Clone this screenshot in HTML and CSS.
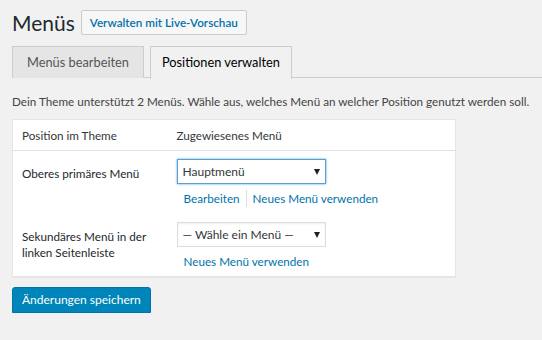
FILE: index.html
```html
<!DOCTYPE html>
<html lang="de">
<head>
    <meta charset="UTF-8">
    <title>Menüs</title>
    <link rel="stylesheet" href="styles.css">
</head>
<body>
    <div class="wrap">
        <div class="title-row">
            <h1>Menüs</h1>
            <a class="title-action" href="#">Verwalten mit Live-Vorschau</a>
        </div>

        <div class="tabs">
            <a class="tab" href="#">Menüs bearbeiten</a>
            <a class="tab active" href="#">Positionen verwalten</a>
        </div>

        <p class="intro">Dein Theme unterstützt 2 Menüs. Wähle aus, welches Menü an welcher Position genutzt werden soll.</p>

        <table class="locations">
            <thead>
                <tr>
                    <th class="col-name">Position im Theme</th>
                    <th>Zugewiesenes Menü</th>
                </tr>
            </thead>
            <tbody>
                <tr>
                    <td class="col-name">Oberes primäres Menü</td>
                    <td>
                        <span class="select focus">
                            <select>
                                <option>Hauptmenü</option>
                            </select>
                        </span>
                        <div class="links">
                            <a href="#">Bearbeiten</a><span class="sep"></span><a href="#">Neues Menü verwenden</a>
                        </div>
                    </td>
                </tr>
                <tr>
                    <td class="col-name">Sekundäres Menü in der linken Seitenleiste</td>
                    <td>
                        <span class="select">
                            <select>
                                <option>— Wähle ein Menü —</option>
                            </select>
                        </span>
                        <div class="links">
                            <a href="#">Neues Menü verwenden</a>
                        </div>
                    </td>
                </tr>
            </tbody>
        </table>

        <button class="save-btn">Änderungen speichern</button>
    </div>
</body>
</html>
```

FILE: styles.css
```css
* {
    margin: 0;
    padding: 0;
    box-sizing: border-box;
}

body {
    font-family: Lato, 'Open Sans', sans-serif;
    font-size: 11.7px;
    background: #f1f1f1;
    color: #444;
}

a {
    color: #0073aa;
    text-decoration: none;
}

.wrap {
    padding: 10px 0 0 12px;
}

.title-row {
    display: flex;
    align-items: center;
    gap: 6px;
}

h1 {
    font-size: 21px;
    font-weight: 400;
    line-height: 24px;
    color: #23282d;
}

.title-action {
    display: inline-block;
    height: 25px;
    line-height: 23px;
    padding: 0 8px;
    border: 1px solid #ccc;
    border-radius: 2px;
    background: #f7f7f7;
    font-size: 11.7px;
    font-weight: 600;
}

.tabs {
    display: flex;
    gap: 6px;
    margin-top: 11px;
    border-bottom: 1px solid #ccc;
    height: 32px;
}

.tab {
    height: 32px;
    padding: 0 11px;
    line-height: 30px;
    font-size: 12.8px;
    color: #555;
    background: #e5e5e5;
    border: 1px solid #ccc;
    border-bottom: none;
}

.tab:first-child {
    padding: 0 14px;
}

.tab.active {
    color: #000;
    background: #f1f1f1;
    height: 33px;
}

.intro {
    margin: 14px 0 8px;
    line-height: 19px;
}

.locations {
    width: 444px;
    background: #fff;
    border: 1px solid #e5e5e5;
    border-collapse: collapse;
    box-shadow: 0 1px 1px rgba(0, 0, 0, 0.04);
    color: #32373c;
}

.locations th {
    font-weight: 400;
    text-align: left;
    height: 31px;
    padding: 0 9px;
    border-bottom: 1px solid #e1e1e1;
}

.locations td {
    vertical-align: top;
    padding: 8px 9px 0;
}

.locations th.col-name,
.locations td.col-name {
    width: 164px;
    padding-right: 8px;
}

.locations td.col-name {
    padding-top: 14px;
    line-height: 16px;
    color: #23282d;
}

.locations th + th {
    padding-left: 0;
}

.locations td + td {
    padding-left: 0;
}

.select {
    position: relative;
    display: inline-block;
}

.select select {
    appearance: none;
    -webkit-appearance: none;
    width: 149px;
    height: 25px;
    padding: 0 20px 0 5px;
    font-family: inherit;
    font-size: 12px;
    color: #32373c;
    background: #fff;
    border: 1px solid #ddd;
    box-shadow: inset 0 1px 2px rgba(0, 0, 0, 0.07);
    outline: none;
}

.select.focus select {
    border-color: #5b9dd9;
    box-shadow: 0 0 2px rgba(30, 140, 190, 0.8);
}

.select::after {
    content: "";
    position: absolute;
    right: 6px;
    top: 10px;
    border-left: 3px solid transparent;
    border-right: 3px solid transparent;
    border-top: 6px solid #222;
    pointer-events: none;
}

.links {
    display: flex;
    align-items: center;
    padding: 4px 0 6px 7px;
    line-height: 20px;
}

.sep {
    width: 1px;
    height: 17px;
    background: #ddd;
    margin: 0 6px;
}

.locations tr:last-child .links {
    padding-bottom: 5px;
}

.save-btn {
    margin-top: 10px;
    height: 26px;
    padding: 0 9px 1px;
    font-family: inherit;
    font-size: 12px;
    color: #fff;
    background: #0085ba;
    border: 1px solid #0073aa;
    border-radius: 3px;
    box-shadow: 0 1px 0 #006799;
    cursor: pointer;
}
```
